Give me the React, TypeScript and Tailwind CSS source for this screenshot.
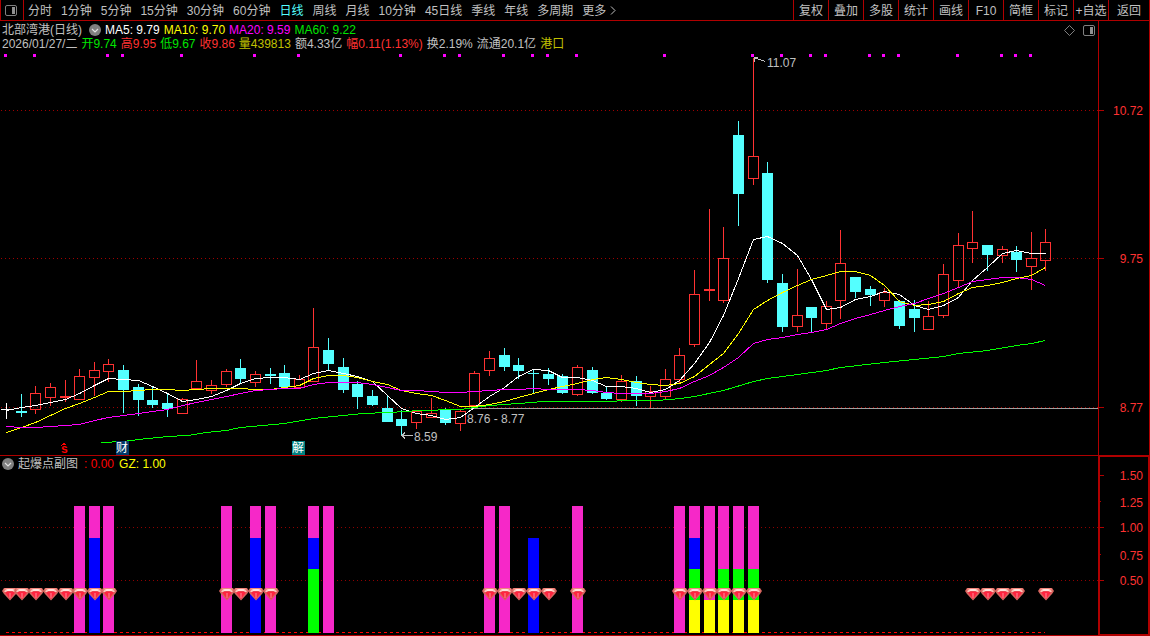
import React from "react";

type Candle = [kind: "r" | "c" | "w", high: number, top: number, bottom: number, low: number];

const RED = "#ff3232";
const CYAN = "#54ffff";
const FRAME = "#b00000";

const cx = (i: number) => Math.round(6 + i * 14.64);

const candles: Candle[] = [
  ["w", 403, 409, 410, 419], ["c", 394, 411, 413, 417], ["r", 386, 393, 410, 414], ["r", 383, 387, 398, 406],
  ["r", 380, 396, 398, 402], ["r", 369, 376, 400, 400], ["r", 362, 370, 378, 396], ["r", 359, 364, 372, 382],
  ["c", 365, 370, 390, 413], ["c", 384, 387, 400, 416], ["c", 386, 400, 405, 408], ["c", 394, 403, 409, 417],
  ["r", 398, 399, 414, 414], ["r", 360, 381, 389, 389], ["r", 380, 385, 391, 394], ["r", 369, 371, 385, 387],
  ["c", 359, 368, 379, 384], ["r", 371, 374, 383, 387], ["c", 368, 374, 376, 384], ["c", 365, 373, 387, 387],
  ["r", 375, 379, 388, 388], ["r", 308, 347, 382, 382], ["c", 338, 350, 364, 370], ["c", 358, 367, 390, 393],
  ["c", 381, 384, 397, 409], ["c", 390, 396, 405, 406], ["c", 395, 408, 422, 422], ["c", 410, 419, 426, 436],
  ["r", 411, 411, 423, 429], ["r", 398, 413, 418, 418], ["c", 408, 409, 423, 425], ["r", 410, 411, 424, 431],
  ["r", 371, 373, 406, 406], ["r", 351, 358, 371, 376], ["c", 348, 355, 367, 371], ["c", 358, 365, 371, 379],
  ["c", 369, 373, 374, 394], ["c", 368, 374, 379, 385], ["c", 374, 376, 393, 394], ["r", 365, 367, 395, 396],
  ["c", 367, 370, 393, 394], ["c", 387, 393, 399, 400], ["r", 375, 381, 400, 402], ["c", 376, 381, 396, 406],
  ["r", 386, 391, 397, 408], ["r", 369, 379, 397, 399], ["r", 348, 355, 380, 384], ["r", 270, 294, 345, 347],
  ["r", 209, 289, 291, 301], ["r", 227, 258, 301, 303], ["c", 121, 135, 194, 226], ["r", 58, 156, 179, 185],
  ["c", 162, 173, 280, 283], ["c", 274, 283, 327, 332], ["r", 269, 315, 327, 332], ["c", 307, 307, 318, 333],
  ["r", 301, 306, 324, 329], ["r", 230, 263, 301, 319], ["c", 277, 277, 292, 298], ["c", 286, 289, 295, 306],
  ["r", 288, 292, 301, 307], ["c", 300, 301, 326, 329], ["c", 300, 309, 318, 332], ["r", 301, 316, 330, 330],
  ["r", 264, 274, 316, 318], ["r", 233, 245, 281, 287], ["r", 211, 242, 249, 263], ["c", 245, 245, 255, 271],
  ["r", 246, 249, 256, 263], ["c", 246, 252, 260, 272], ["r", 232, 258, 267, 290], ["r", 229, 242, 261, 271],
];

const ma5 = [
  410, 407, 405, 402, 399, 393, 385, 378, 379, 380, 386, 393, 401, 399, 396, 390, 383, 378, 377, 377, 379, 373, 370, 373,
  376, 381, 395, 408, 413, 415, 419, 417, 407, 396, 387, 376, 369, 370, 377, 377, 380, 386, 386, 388, 392, 389, 380, 363,
  342, 315, 278, 239, 236, 243, 255, 279, 309, 307, 299, 296, 291, 294, 305, 309, 305, 297, 280, 267, 253, 250, 253, 253,
];
const ma10 = [
  432, 427, 422, 415, 408, 403, 397, 391, 391, 390, 389, 389, 390, 389, 388, 388, 388, 389, 389, 387, 385, 378, 375, 375,
  377, 381, 384, 390, 393, 395, 400, 406, 406, 404, 401, 397, 393, 389, 386, 383, 379, 377, 379, 382, 384, 385, 383, 376,
  364, 353, 333, 309, 300, 292, 285, 279, 275, 271, 271, 275, 285, 301, 305, 304, 301, 293, 287, 285, 282, 278, 275, 267,
];
const ma20 = [
  426, 427, 427, 426, 425, 424, 420, 417, 415, 413, 411, 409, 405, 402, 399, 396, 393, 390, 389, 388, 388, 384, 382, 382,
  382, 384, 387, 390, 390, 391, 392, 392, 391, 390, 389, 389, 388, 389, 389, 389, 390, 392, 393, 393, 393, 391, 388, 381,
  375, 367, 357, 343, 339, 337, 334, 332, 329, 323, 318, 314, 310, 306, 303, 298, 293, 287, 281, 279, 277, 277, 279, 285,
];
const ma60 =
  "101,442 123,441 138,439 167,436 187,435 206,432 226,430 240,427 262,425 284,423 313,418 343,415 363,413 387,412 407,411 416,410 460,409 474,407 489,405 518,403 543,401 585,401 606,401 627,400 657,400 680,398 694,396 723,390 753,381 767,378 797,374 826,370 840,367 884,362 914,359 943,356 958,353 987,350 1016,345 1031,343 1045,340";

const trace = (ys: number[]) => ys.map((y, i) => `${cx(i) + 0.5},${y + 0.5}`).join(" ");

const signals = [0, 2, 7, 8, 12, 17, 20, 27, 30, 31, 34, 36, 37, 39, 45, 51, 53, 55, 56, 59, 60, 61, 65, 68, 69, 70];

const PINK = "#f628c8";
const BLUE = "#0000ff";
const GREEN = "#00ff00";
const YELLOW = "#ffff00";
const P = 506;
const B = 538;
const G = 569;
const Y = 600;

const bars: { i: number; parts: [string, number][] }[] = [
  { i: 5, parts: [[PINK, P]] },
  { i: 6, parts: [[PINK, P], [BLUE, B]] },
  { i: 7, parts: [[PINK, P]] },
  { i: 15, parts: [[PINK, P]] },
  { i: 17, parts: [[PINK, P], [BLUE, B]] },
  { i: 18, parts: [[PINK, P]] },
  { i: 21, parts: [[PINK, P], [BLUE, B], [GREEN, G]] },
  { i: 22, parts: [[PINK, P]] },
  { i: 33, parts: [[PINK, P]] },
  { i: 34, parts: [[PINK, P]] },
  { i: 36, parts: [[BLUE, B]] },
  { i: 39, parts: [[PINK, P]] },
  { i: 46, parts: [[PINK, P]] },
  { i: 47, parts: [[PINK, P], [BLUE, B], [GREEN, G], [YELLOW, Y]] },
  { i: 48, parts: [[PINK, P], [YELLOW, Y]] },
  { i: 49, parts: [[PINK, P], [GREEN, G], [YELLOW, Y]] },
  { i: 50, parts: [[PINK, P], [GREEN, G], [YELLOW, Y]] },
  { i: 51, parts: [[PINK, P], [GREEN, G], [YELLOW, Y]] },
];

const gems = [0, 1, 2, 3, 4, 5, 6, 7, 15, 16, 17, 18, 33, 34, 35, 36, 37, 39, 46, 47, 48, 49, 50, 51, 66, 67, 68, 69, 71];

const periods = ["分时", "1分钟", "5分钟", "15分钟", "30分钟", "60分钟", "日线", "周线", "月线", "10分钟", "45日线", "季线", "年线", "多周期"];
const tools = ["复权", "叠加", "多股", "统计", "画线", "F10", "简框", "标记", "+自选"];

const averages = [
  { text: "MA5: 9.79", tone: "text-white" },
  { text: "MA10: 9.70", tone: "text-[#ffff00]" },
  { text: "MA20: 9.59", tone: "text-[#ff00ff]" },
  { text: "MA60: 9.22", tone: "text-[#00e600]" },
];

const quote = [
  { text: "2026/01/27/二", tone: "text-[#c0c0c0]" },
  { text: "开9.74", tone: "text-[#00e600]" },
  { text: "高9.95", tone: "text-[#ff3232]" },
  { text: "低9.67", tone: "text-[#00e600]" },
  { text: "收9.86", tone: "text-[#ff3232]" },
  { text: "量439813", tone: "text-[#c0c000]" },
  { text: "额4.33亿", tone: "text-[#c0c0c0]" },
  { text: "幅0.11(1.13%)", tone: "text-[#ff3232]" },
  { text: "换2.19%", tone: "text-[#c0c0c0]" },
  { text: "流通20.1亿", tone: "text-[#c0c0c0]" },
  { text: "港口", tone: "text-[#c0c000]" },
];

function PanelIcon() {
  return (
    <svg width="12" height="11" viewBox="0 0 12 11" aria-hidden="true">
      <rect x="0.5" y="0.5" width="11" height="10" rx="1.5" fill="none" stroke="#808080" />
      <rect x="7" y="2" width="3" height="7" fill="#909090" />
    </svg>
  );
}

function ChevronBadge() {
  return (
    <svg width="12" height="12" viewBox="0 0 12 12" aria-hidden="true">
      <circle cx="6" cy="6" r="6" fill="#808080" />
      <path d="M3 5l3 3 3-3" fill="none" stroke="#e0e0e0" strokeWidth="1.2" />
    </svg>
  );
}

function CandleMark({ i, c }: { i: number; c: Candle }) {
  const [kind, high, top, bottom, low] = c;
  const x = cx(i);
  const color = kind === "r" ? RED : kind === "c" ? CYAN : "#ffffff";
  const solid = kind !== "r" || bottom - top <= 2;
  return (
    <g fill={color}>
      {solid ? (
        <>
          <rect x={x} y={high} width="1" height={low - high} />
          <rect x={x - 5} y={top} width="11" height={bottom - top} />
        </>
      ) : (
        <>
          {top > high && <rect x={x} y={high} width="1" height={top - high} />}
          {low > bottom && <rect x={x} y={bottom} width="1" height={low - bottom} />}
          <rect x={x - 4.5} y={top + 0.5} width="10" height={bottom - top - 1} fill="none" stroke={color} />
        </>
      )}
    </g>
  );
}

function Gem({ x }: { x: number }) {
  return (
    <g transform={`translate(${x} 588)`}>
      <path d="M2 0h12l2 3-2 3-6 6.500L2 6 0 3z" fill="#d8655f" />
      <path d="M3 0h10l1.500 2.500H1.500z" fill="#f0857c" />
      <path d="M3 4.500l2-1h6l2 1-5 6.500z" fill="#ff2440" />
      <path d="M4.500 1h7L14 3.500l-1.500.7L10.500 3h-5l-2 1.200L2 3.500z" fill="#ffc4ba" />
      <path d="M5.500 1.500h5l1 1h-7z" fill="#ffffff" />
      <path d="M7.500 5h1v5h-1z" fill="#ff8c98" />
    </g>
  );
}

function Note({ x, y, className, children }: { x: number; y: number; className: string; children: React.ReactNode }) {
  return (
    <span
      className={`absolute whitespace-nowrap leading-[14px] ${className}`}
      style={{ left: `${(x / 1098) * 100}%`, top: y - 51 }}
    >
      {children}
    </span>
  );
}

function Toolbar() {
  return (
    <header className="flex h-[21px] items-stretch border-x border-b border-[#b00000]">
      <button aria-label="侧栏" className="flex w-[23px] items-center border-r border-[#b00000] pl-1">
        <PanelIcon />
      </button>
      <nav className="flex flex-1 items-center gap-[9px] overflow-hidden pl-1 pt-px">
        {periods.map((p) => (
          <button key={p} className={p === "日线" ? "shrink-0 text-[#54ffff]" : "shrink-0"}>
            {p}
          </button>
        ))}
        <button className="flex shrink-0 items-center gap-1">
          更多
          <svg width="7" height="9" viewBox="0 0 7 9" aria-hidden="true">
            <path d="M1 0.500l4 4-4 4" fill="none" stroke="#c0c0c0" />
          </svg>
        </button>
      </nav>
      <div className="flex">
        {tools.map((t) => (
          <button key={t} className="w-[35px] whitespace-nowrap border-l border-[#b00000] pt-px text-center">
            {t}
          </button>
        ))}
        <button className="w-[41px] border-l border-[#b00000] pt-px text-center">返回</button>
      </div>
    </header>
  );
}

function PriceChart() {
  return (
    <div className="relative">
      <svg className="block h-[404px] w-full" viewBox="0 51 1098 404" preserveAspectRatio="none" shapeRendering="crispEdges">
        {[110, 258, 407].map((y) => (
          <path key={y} d={`M1 ${y + 0.5}H1098`} stroke="#a00000" strokeDasharray="1 3" />
        ))}
        <path d="M465 408.500H1098" stroke="#a0a0a0" />
        {signals.map((i) => (
          <rect key={i} x={cx(i) - 2} y="54" width="3" height="3" fill="#ff00ff" />
        ))}
        {candles.map((c, i) => (
          <CandleMark key={i} i={i} c={c} />
        ))}
        <g fill="none">
          <polyline points={trace(ma5)} stroke="#ffffff" />
          <polyline points={trace(ma10)} stroke="#ffff00" />
          <polyline points={trace(ma20)} stroke="#ff00ff" />
          <polyline points={ma60} stroke="#00ff00" transform="translate(0.5 0.5)" />
          <path d="M754 57.500l11 4M754 61.500v-4h4" stroke="#c0c0c0" />
          <path d="M402 435.500h11M405 432.500l-3 3 3 3" stroke="#c0c0c0" />
          <path d="M61.500 445.500l2.500-2 2.500 2" stroke="#ff0000" />
        </g>
      </svg>
      <Note x={767} y={56} className="">11.07</Note>
      <Note x={467} y={412} className="">8.76 - 8.77</Note>
      <Note x={414} y={430} className="">8.59</Note>
      <Note x={61} y={442} className="text-[12px] font-bold text-[#ff0000]">s</Note>
      <Note x={116} y={441} className="w-[13px] bg-[#003868] text-white">财</Note>
      <Note x={292} y={441} className="w-[13px] bg-[#008080] text-white">解</Note>
    </div>
  );
}

function SignalChart() {
  return (
    <svg className="block h-[163px] w-full" viewBox="0 472 1098 163" preserveAspectRatio="none" shapeRendering="crispEdges">
      {[527, 580].map((y) => (
        <path key={y} d={`M1 ${y + 0.5}H1098`} stroke="#900000" strokeDasharray="1 3" />
      ))}
      <path d="M6 632.500H1045" stroke="#ff0000" strokeDasharray="3 3" />
      {bars.map(({ i, parts }) =>
        parts.map(([color, top], k) => {
          const end = k + 1 < parts.length ? parts[k + 1][1] : 633;
          return <rect key={`${i}-${color}`} x={cx(i) - 5} y={top} width="11" height={end - top} fill={color} />;
        }),
      )}
      <g shapeRendering="auto">
        {gems.map((i) => (
          <Gem key={i} x={Math.max(2, cx(i) - 7)} />
        ))}
      </g>
    </svg>
  );
}

function AxisLabels({ x, items }: { x: number; items: [string, number][] }) {
  return (
    <g fill={RED} fontSize="12" textAnchor="end">
      {items.map(([label, y]) => (
        <text key={label} x={x} y={y + 5}>
          {label}
        </text>
      ))}
    </g>
  );
}

export default function App() {
  return (
    <div className="min-h-screen bg-black font-['Liberation_Sans','Noto_Sans_CJK_SC',sans-serif] text-[12px] leading-[14px] text-[#c0c0c0]">
      <Toolbar />
      <main>
        <section className="flex">
          <div className="min-w-0 flex-1">
            <div className="h-[30px] pl-[2px] pt-[2px]">
              <div className="flex h-[14px] items-center gap-1 whitespace-nowrap">
                <h1>北部湾港(日线)</h1>
                <button aria-label="展开指标" className="ml-[3px]">
                  <ChevronBadge />
                </button>
                {averages.map((a) => (
                  <span key={a.text} className={a.tone}>
                    {a.text}
                  </span>
                ))}
                <div className="ml-auto flex items-center gap-2 pr-[3px]">
                  <button aria-label="标记点">
                    <svg width="11" height="11" viewBox="0 0 11 11" aria-hidden="true">
                      <path d="M5.500 0.500l5 5-5 5-5-5z" fill="none" stroke="#808080" />
                    </svg>
                  </button>
                  <button aria-label="右侧栏">
                    <PanelIcon />
                  </button>
                </div>
              </div>
              <div className="flex h-[14px] items-center gap-1 whitespace-nowrap">
                {quote.map((q) => (
                  <span key={q.text} className={q.tone}>
                    {q.text}
                  </span>
                ))}
              </div>
            </div>
            <PriceChart />
          </div>
          <div className="w-[52px] shrink-0 border-x border-[#b00000]">
            <svg className="block" width="50" height="434" viewBox="1099 21 50 434" shapeRendering="crispEdges">
              {[110, 258, 407].map((y) => (
                <rect key={y} x="1099" y={y} width="5" height="1" fill={FRAME} />
              ))}
              <AxisLabels x={1143} items={[["10.72", 110], ["9.75", 258], ["8.77", 407]]} />
            </svg>
          </div>
        </section>
        <section className="flex">
          <div className="min-w-0 flex-1 border-y border-[#b00000]">
            <div className="flex h-4 items-center whitespace-nowrap pl-[2px]">
              <button aria-label="展开副图指标">
                <ChevronBadge />
              </button>
              <h2 className="ml-1">起爆点副图</h2>
              <span className="ml-[6px] text-[#ff0000]">: 0.00</span>
              <span className="ml-[5px] text-[#ffff00]">GZ: 1.00</span>
            </div>
            <SignalChart />
          </div>
          <div className="w-[52px] shrink-0 border-2 border-[#b00000]">
            <svg className="block" width="48" height="177" viewBox="1100 457 48 177" shapeRendering="crispEdges">
              {[475, 527, 580].map((y) => (
                <rect key={y} x="1100" y={y} width="4" height="1" fill={FRAME} />
              ))}
              {[501, 554].map((y) => (
                <rect key={y} x="1100" y={y} width="1" height="1" fill={FRAME} />
              ))}
              <AxisLabels x={1143} items={[["1.50", 475], ["1.25", 502], ["1.00", 527], ["0.75", 555], ["0.50", 580]]} />
            </svg>
          </div>
        </section>
      </main>
    </div>
  );
}
